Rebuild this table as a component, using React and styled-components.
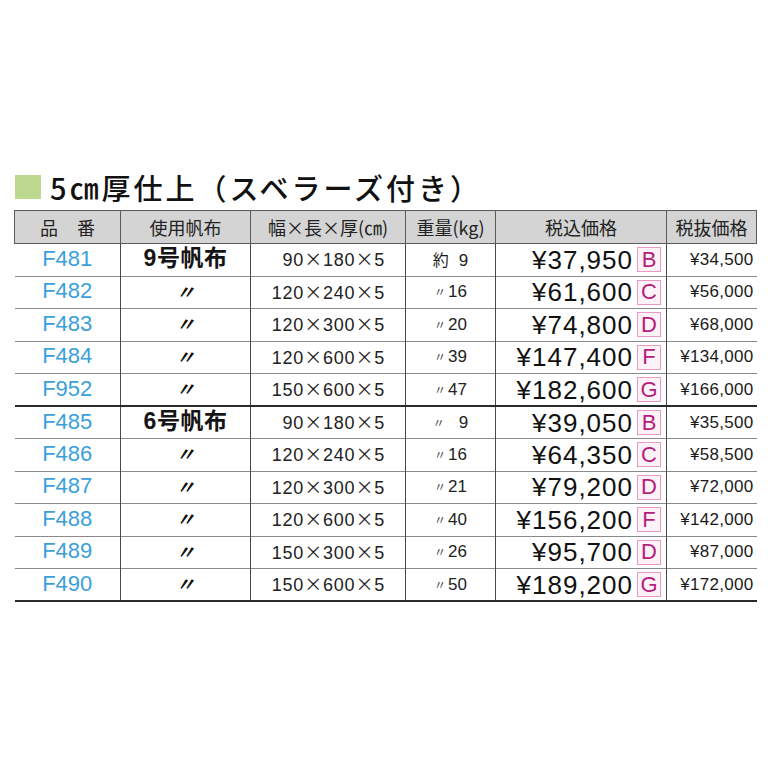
import React from 'react';
import styled, { createGlobalStyle } from 'styled-components';

const GlobalStyle = createGlobalStyle`
  body {
    margin: 0;
    background: #fff;
    font-family: "Liberation Sans", "Noto Sans CJK JP", sans-serif;
    color: #1a1a1a;
  }
`;

const ROWS = [
  { code: 'F481', cloth: '9号帆布', size: [90, 180, 5], weight: '9', first: true, price: '¥37,950', grade: 'B', net: '¥34,500' },
  { code: 'F482', size: [120, 240, 5], weight: '16', price: '¥61,600', grade: 'C', net: '¥56,000' },
  { code: 'F483', size: [120, 300, 5], weight: '20', price: '¥74,800', grade: 'D', net: '¥68,000' },
  { code: 'F484', size: [120, 600, 5], weight: '39', price: '¥147,400', grade: 'F', net: '¥134,000' },
  { code: 'F952', size: [150, 600, 5], weight: '47', price: '¥182,600', grade: 'G', net: '¥166,000', groupEnd: true },
  { code: 'F485', cloth: '6号帆布', size: [90, 180, 5], weight: '9', pad: true, price: '¥39,050', grade: 'B', net: '¥35,500' },
  { code: 'F486', size: [120, 240, 5], weight: '16', price: '¥64,350', grade: 'C', net: '¥58,500' },
  { code: 'F487', size: [120, 300, 5], weight: '21', price: '¥79,200', grade: 'D', net: '¥72,000' },
  { code: 'F488', size: [120, 600, 5], weight: '40', price: '¥156,200', grade: 'F', net: '¥142,000' },
  { code: 'F489', size: [150, 300, 5], weight: '26', price: '¥95,700', grade: 'D', net: '¥87,000' },
  { code: 'F490', size: [150, 600, 5], weight: '50', price: '¥189,200', grade: 'G', net: '¥172,000' },
];

const Page = styled.div`
  padding: 172px 0 0 14px;
`;

const Title = styled.div`
  display: flex;
  align-items: center;
  height: 30px;
  margin-bottom: 8px;
`;

const Square = styled.span`
  width: 26px;
  height: 24px;
  background: #bcd98f;
  margin-left: 1px;
`;

const TitleText = styled.h2`
  margin: 0 0 0 9px;
  font-family: "Noto Sans CJK JP", sans-serif;
  font-size: 29px;
  font-weight: 500;
  line-height: 30px;
  color: #111;
  letter-spacing: 3px;
`;

const Table = styled.table`
  border-collapse: collapse;
  table-layout: fixed;
  width: 742px;
`;

const Th = styled.th`
  height: 32px;
  padding: 0;
  background: #d4d4d4;
  border: 1px solid #5a5a5a;
  font-family: "Noto Sans CJK JP", sans-serif;
  font-size: 18px;
  font-weight: 400;
  line-height: 24px;
  color: #222;
  letter-spacing: ${(p) => p.$spaced ? '19px' : '0'};
  text-indent: ${(p) => p.$spaced ? '19px' : '0'};
`;

const Tr = styled.tr`
  height: 32.5px;
  border-bottom: ${(p) => p.$thick ? '2px solid #2a2a2a' : '1px solid #8a8a8a'};
`;

const Td = styled.td`
  padding: 0 ${(p) => p.$pr || 0}px 0 0;
  border-left: ${(p) => p.$first ? 'none' : '1px solid #4a4a4a'};
  text-align: ${(p) => p.$align || 'center'};
  white-space: nowrap;
  vertical-align: middle;
  line-height: 26px;
`;

const Code = styled.span`
  color: #3aa0dc;
  font-size: 22px;
`;

const Cloth = styled.span`
  font-family: "Liberation Sans", "Noto Sans CJK JP", sans-serif;
  font-size: 23px;
  font-weight: 700;
  color: #151515;
  letter-spacing: 0.5px;
`;

const Ditto = styled.span`
  font-family: "Noto Sans CJK JP", sans-serif;
  font-size: 19px;
  font-weight: 700;
  font-style: italic;
  color: #111;
`;

const Size = styled.span`
  font-size: 18px;
  letter-spacing: 0.8px;
  color: #222;
`;

const Times = styled.span`
  font-family: "Noto Sans CJK JP", sans-serif;
  font-size: 18px;
`;

const Weight = styled.span`
  font-size: 17px;
  color: #222;
`;

const SmallDitto = styled.span`
  font-family: "Noto Sans CJK JP", sans-serif;
  font-size: 12px;
  color: #444;
  margin-right: ${(p) => p.$wide ? '14px' : '2px'};
`;

const Yakushi = styled.span`
  font-family: "Noto Sans CJK JP", sans-serif;
  font-size: 16px;
  margin-right: 10px;
`;

const PriceWrap = styled.div`
  display: flex;
  align-items: center;
  justify-content: flex-end;
  padding-right: 5px;
  gap: 4px;
`;

const Price = styled.span`
  font-size: 26px;
  letter-spacing: 1px;
  color: #111;
`;

const Grade = styled.span`
  display: inline-flex;
  align-items: center;
  justify-content: center;
  width: 22px;
  height: 23px;
  border: 1px solid #e79ac2;
  background: #fdf2f7;
  color: #b51d7c;
  font-size: 22px;
  line-height: 1;
`;

const Net = styled.span`
  font-size: 17px;
  letter-spacing: 0.3px;
  color: #1a1a1a;
`;

export default function App() {
  return (
    <Page>
      <GlobalStyle />
      <Title>
        <Square />
        <TitleText>5㎝厚仕上（スベラーズ付き）</TitleText>
      </Title>
      <Table>
        <colgroup>
          <col style={{ width: 106 }} />
          <col style={{ width: 130 }} />
          <col style={{ width: 155 }} />
          <col style={{ width: 90 }} />
          <col style={{ width: 171 }} />
          <col style={{ width: 90 }} />
        </colgroup>
        <thead>
          <tr>
            <Th $spaced>品番</Th>
            <Th>使用帆布</Th>
            <Th>幅×長×厚(㎝)</Th>
            <Th>重量(kg)</Th>
            <Th>税込価格</Th>
            <Th>税抜価格</Th>
          </tr>
        </thead>
        <tbody>
          {ROWS.map((r, i) => (
            <Tr key={r.code} $thick={r.groupEnd || i === ROWS.length - 1}>
              <Td $first><Code>{r.code}</Code></Td>
              <Td>{r.cloth ? <Cloth>{r.cloth}</Cloth> : <Ditto>〃</Ditto>}</Td>
              <Td $align="right" $pr={20}>
                <Size>
                  {r.size[0]}<Times>×</Times>{r.size[1]}<Times>×</Times>{r.size[2]}
                </Size>
              </Td>
              <Td>
                {r.first ? <Yakushi>約</Yakushi> : <SmallDitto $wide={r.pad}>〃</SmallDitto>}
                <Weight>{r.weight}</Weight>
              </Td>
              <Td>
                <PriceWrap>
                  <Price>{r.price}</Price>
                  <Grade>{r.grade}</Grade>
                </PriceWrap>
              </Td>
              <Td $align="right" $pr={3}><Net>{r.net}</Net></Td>
            </Tr>
          ))}
        </tbody>
      </Table>
    </Page>
  );
}
